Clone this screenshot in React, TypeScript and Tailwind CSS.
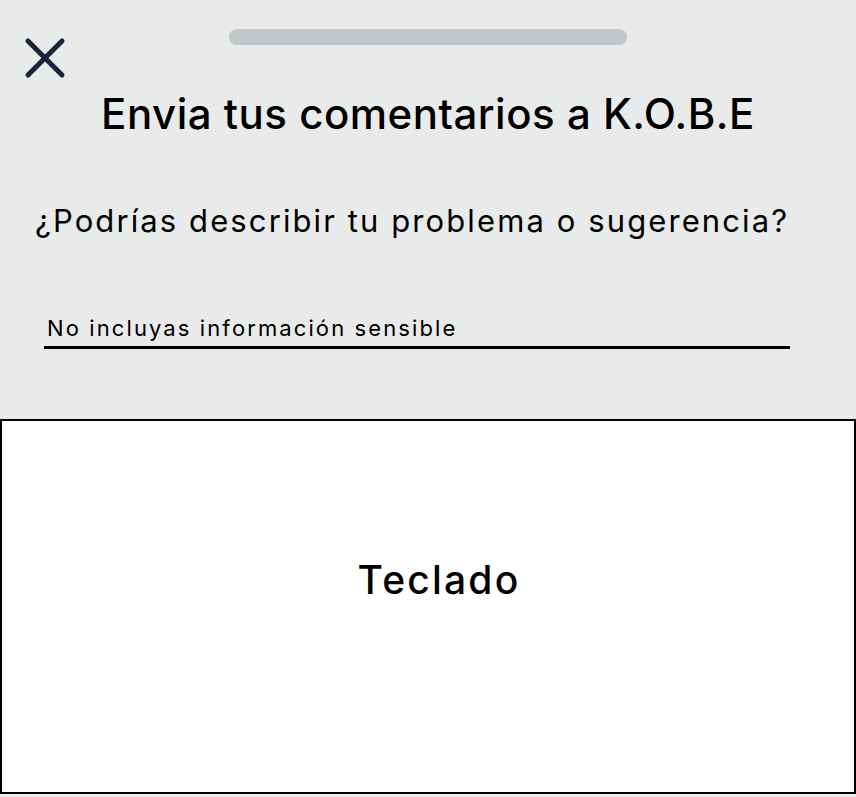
const CloseIcon = () => (
  <svg width="42" height="42" viewBox="0 0 42 42" fill="none" stroke="#1f2339" strokeWidth="5" strokeLinecap="round">
    <path d="M4 4 L38 38" />
    <path d="M38 4 L4 38" />
  </svg>
);

const Keyboard = () => {
  return (
    <div className="mt-[70px] h-[375px] border-2 border-black bg-white flex justify-center pt-[136px] pl-[22px]">
      <div className="text-[39px] leading-[46px] font-medium tracking-[2.2px] text-black">Teclado</div>
    </div>
  );
};

const App = () => {
  return (
    <div
      className="h-[797px] w-full bg-[#e9eaea] flex flex-col overflow-hidden"
      style={{ fontFamily: "Inter, 'Noto Sans', sans-serif" }}
    >
      {/* header */}
      <div className="grid grid-cols-[1fr_398px_1fr] items-start">
        <div className="pl-[24px] pt-[37px]">
          <CloseIcon />
        </div>
        <div className="mt-[29px] h-[16px] rounded-full bg-[#c4c7ca]"></div>
        <div></div>
      </div>

      <h1 className="mt-[10px] text-center text-[42px] leading-[50px] font-medium tracking-[0.5px] text-black">
        Envia tus comentarios a K.O.B.E
      </h1>

      <p className="mt-[64px] pl-[35px] text-[31px] leading-[36px] tracking-[2.1px] text-black">
        ¿Podrías describir tu problema o sugerencia?
      </p>

      <div className="mt-[75px] ml-[44px] w-[746px] border-b-[3px] border-black pb-[4px]">
        <div className="pl-[3px] text-[22px] leading-[28px] tracking-[2.1px] text-black">No incluyas información sensible</div>
      </div>

      <Keyboard />
    </div>
  );
};

export default App;
